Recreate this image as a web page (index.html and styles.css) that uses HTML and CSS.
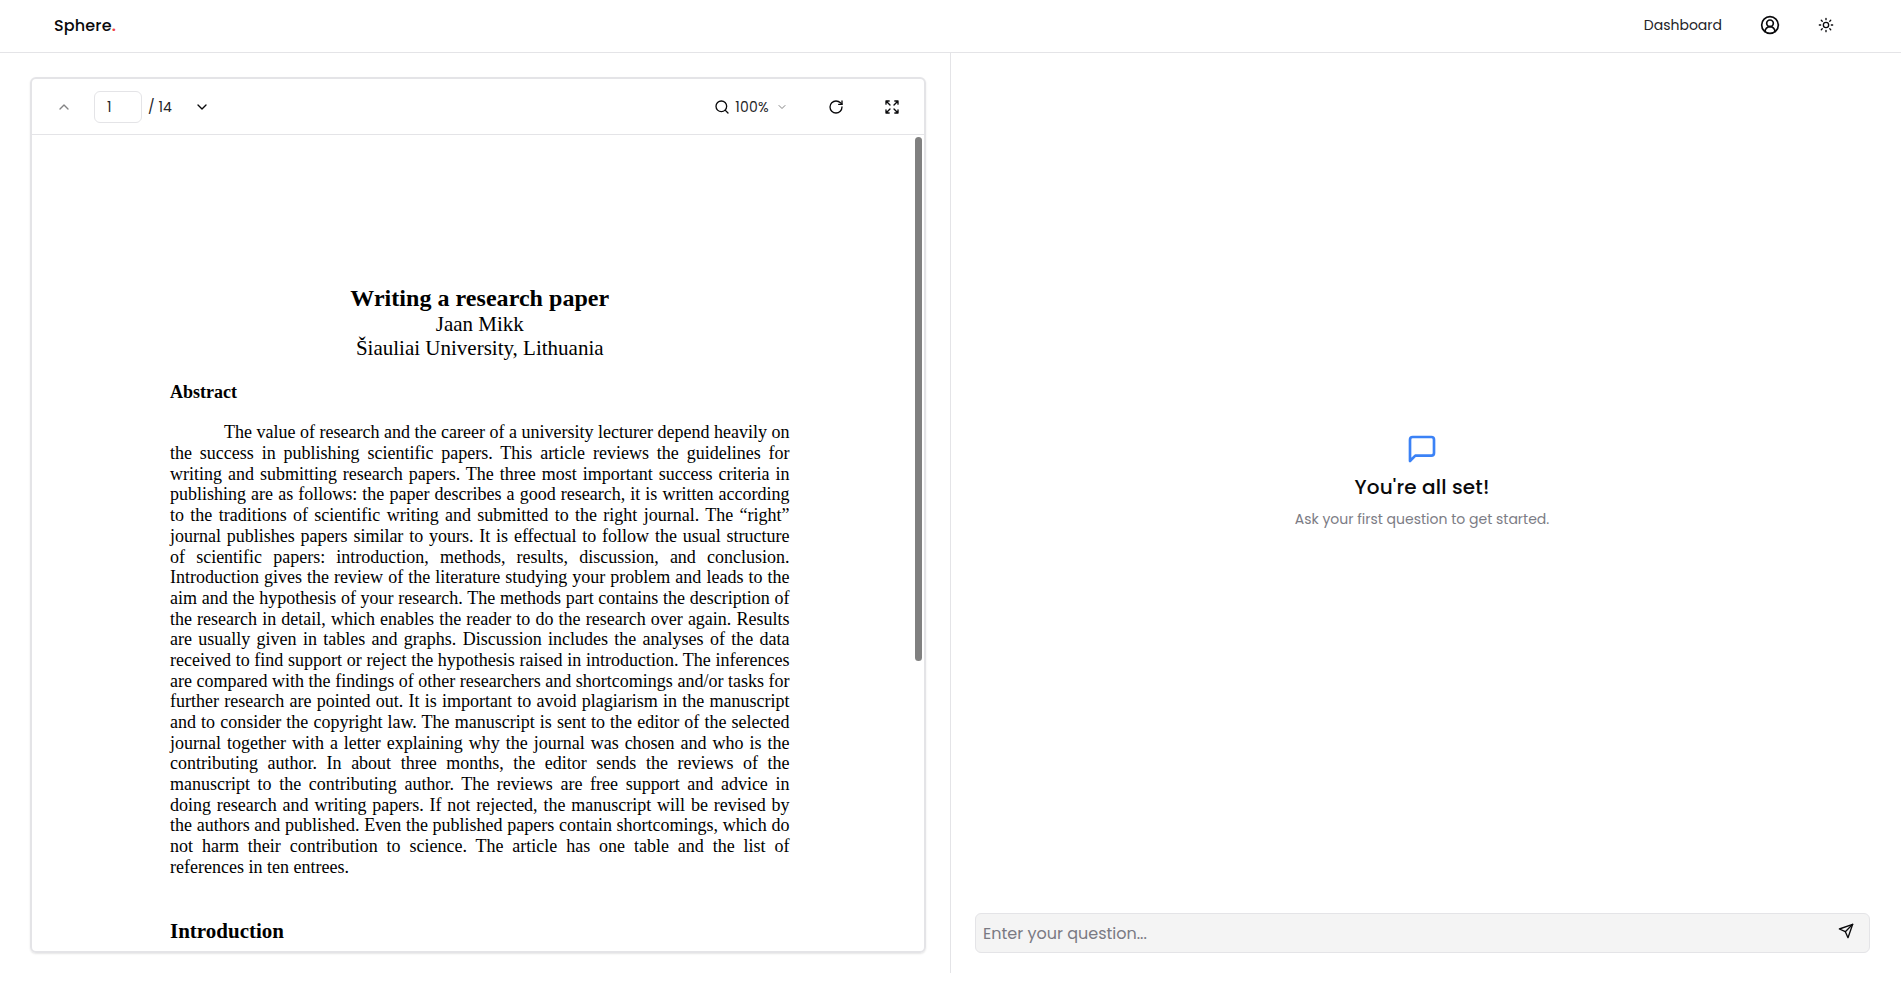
FILE: index.html
```html
<!DOCTYPE html>
<html lang="en">
<head>
<meta charset="utf-8">
<title>Sphere</title>
<link rel="stylesheet" href="styles.css">
</head>
<body>
<header class="navbar">
  <a class="brand">Sphere<span class="dot">.</span></a>
  <nav class="nav-links">
    <a class="nav-link">Dashboard</a>
    <svg class="icon icon-user" viewBox="0 0 24 24"><circle cx="12" cy="12" r="10"/><circle cx="12" cy="10" r="4"/><path d="M18 20a6 6 0 0 0-12 0"/></svg>
    <svg class="icon icon-sun" viewBox="0 0 24 24"><circle cx="12" cy="12" r="4"/><path d="M12 2v2M12 20v2M4.93 4.93l1.41 1.41M17.66 17.66l1.41 1.41M2 12h2M20 12h2M6.34 17.66l-1.41 1.41M19.07 4.93l-1.41 1.41"/></svg>
  </nav>
</header>
<main class="workspace">
  <section class="document-pane">
    <div class="viewer">
      <div class="toolbar">
        <div class="pager">
          <svg class="icon muted" viewBox="0 0 24 24"><path d="m18 15-6-6-6 6"/></svg>
          <div class="page-input">1</div>
          <span class="page-total">/ 14</span>
          <svg class="icon next" viewBox="0 0 24 24"><path d="m6 9 6 6 6-6"/></svg>
        </div>
        <div class="tools">
          <div class="zoom">
            <svg class="icon" viewBox="0 0 24 24"><circle cx="11" cy="11" r="8"/><path d="m21 21-4.3-4.3"/></svg>
            <span class="zoom-value">100%</span>
            <svg class="icon small muted" viewBox="0 0 24 24"><path d="m6 9 6 6 6-6"/></svg>
          </div>
          <svg class="icon" viewBox="0 0 24 24"><path d="M21 12a9 9 0 1 1-9-9c2.52 0 4.93 1 6.74 2.74L21 8"/><path d="M21 3v5h-5"/></svg>
          <svg class="icon" viewBox="0 0 24 24"><path d="m21 21-6-6m6 6v-4.8m0 4.8h-4.8M3 16.2V21m0 0h4.8M3 21l6-6M21 7.8V3m0 0h-4.8M21 3l-6 6M3 7.8V3m0 0h4.8M3 3l6 6"/></svg>
        </div>
      </div>
      <div class="page-area">
        <article class="paper">
          <h1 class="paper-title">Writing a research paper</h1>
          <p class="paper-author">Jaan Mikk</p>
          <p class="paper-author">Šiauliai University, Lithuania</p>
          <h2 class="paper-abstract">Abstract</h2>
          <div class="paper-body">
            <p class="line first">The value of research and the career of a university lecturer depend heavily on</p>
            <p class="line">the success in publishing scientific papers. This article reviews the guidelines for</p>
            <p class="line">writing and submitting research papers. The three most important success criteria in</p>
            <p class="line">publishing are as follows: the paper describes a good research, it is written according</p>
            <p class="line">to the traditions of scientific writing and submitted to the right journal. The “right”</p>
            <p class="line">journal publishes papers similar to yours. It is effectual to follow the usual structure</p>
            <p class="line">of scientific papers: introduction, methods, results, discussion, and conclusion.</p>
            <p class="line">Introduction gives the review of the literature studying your problem and leads to the</p>
            <p class="line">aim and the hypothesis of your research. The methods part contains the description of</p>
            <p class="line">the research in detail, which enables the reader to do the research over again. Results</p>
            <p class="line">are usually given in tables and graphs. Discussion includes the analyses of the data</p>
            <p class="line">received to find support or reject the hypothesis raised in introduction. The inferences</p>
            <p class="line">are compared with the findings of other researchers and shortcomings and/or tasks for</p>
            <p class="line">further research are pointed out. It is important to avoid plagiarism in the manuscript</p>
            <p class="line">and to consider the copyright law. The manuscript is sent to the editor of the selected</p>
            <p class="line">journal together with a letter explaining why the journal was chosen and who is the</p>
            <p class="line">contributing author. In about three months, the editor sends the reviews of the</p>
            <p class="line">manuscript to the contributing author. The reviews are free support and advice in</p>
            <p class="line">doing research and writing papers. If not rejected, the manuscript will be revised by</p>
            <p class="line">the authors and published. Even the published papers contain shortcomings, which do</p>
            <p class="line">not harm their contribution to science. The article has one table and the list of</p>
            <p class="line last">references in ten entrees.</p>
          </div>
          <h2 class="paper-section">Introduction</h2>
        </article>
        <div class="scrollbar"></div>
      </div>
    </div>
  </section>
  <section class="chat-pane">
    <div class="empty-state">
      <svg class="icon icon-chat" viewBox="0 0 24 24"><path d="M21 15a2 2 0 0 1-2 2H7l-4 4V5a2 2 0 0 1 2-2h14a2 2 0 0 1 2 2z"/></svg>
      <h3 class="empty-title">You're all set!</h3>
      <p class="empty-text">Ask your first question to get started.</p>
    </div>
    <div class="prompt">
      <span class="prompt-placeholder">Enter your question...</span>
      <svg class="icon send" viewBox="0 0 24 24"><path d="m22 2-7 20-4-9-9-4Z"/><path d="M22 2 11 13"/></svg>
    </div>
  </section>
</main>
</body>
</html>
```
FILE: styles.css
```css
* { box-sizing: border-box; margin: 0; padding: 0; }

body {
  height: 986px;
  overflow: hidden;
  background: #fff;
  color: #09090b;
  font-family: Poppins, Inter, sans-serif;
  font-size: 14px;
}

.icon {
  width: 16px;
  height: 16px;
  flex: none;
  fill: none;
  stroke: currentColor;
  stroke-width: 2;
  stroke-linecap: round;
  stroke-linejoin: round;
}
.icon.small { width: 12px; height: 12px; }
.icon.muted { opacity: .5; }

.navbar {
  display: flex;
  align-items: center;
  justify-content: space-between;
  height: 53px;
  padding: 0 67px 2px 54px;
  border-bottom: 1px solid #e4e4e7;
}
.brand { font-size: 16px; font-weight: 500; letter-spacing: .15px; }
.dot { color: #ef4444; font-weight: 600; }
.nav-links { display: flex; align-items: center; }
.nav-link, .page-input, .page-total, .zoom-value { color: #242427; }
.icon-user { width: 20px; height: 20px; margin: 0 38px; }

.workspace { display: flex; height: 920px; }
.document-pane {
  width: 951px;
  padding: 24px 24px 20px 30px;
  border-right: 1px solid #e4e4e7;
}
.viewer {
  display: flex;
  flex-direction: column;
  height: 876px;
  border: 2px solid #e4e4e7;
  border-radius: 6px;
  box-shadow: 0 1px 2px rgba(0, 0, 0, .1);
  overflow: hidden;
}
.toolbar {
  display: flex;
  flex: none;
  align-items: center;
  justify-content: space-between;
  height: 56px;
  padding: 1px 24px 0;
  border-bottom: 1px solid #e4e4e7;
}
.pager, .tools, .zoom { display: flex; align-items: center; }
.page-input {
  width: 48px;
  height: 32px;
  margin: 0 6px 0 22px;
  padding-left: 12px;
  border: 1px solid #e4e4e7;
  border-radius: 6px;
  line-height: 30px;
}
.next { margin-left: 22px; }
.tools { gap: 40px; }
.zoom-value { margin: 0 7px 0 5px; letter-spacing: .25px; }

.page-area { position: relative; flex: 1; min-height: 0; }
.scrollbar {
  position: absolute;
  top: 2px;
  right: 2px;
  width: 7px;
  height: 524px;
  border-radius: 4px;
  background: #808080;
}
.paper {
  width: 757.5px;
  padding: 149.8px 0 0 138px;
  color: #000;
  font-family: "Liberation Serif", "Times New Roman", serif;
  font-size: 18px;
  line-height: 20.69px;
}
.paper-title { text-align: center; font-size: 24px; line-height: 27px; letter-spacing: .04px; }
.paper-author { text-align: center; font-size: 21px; line-height: 24.3px; }
.paper-abstract { margin: 21.5px 0 19.8px; font-size: 18px; }
.line { text-align-last: justify; white-space: nowrap; }
.first { padding-left: 54px; }
.last { text-align-last: left; }
.paper-section { margin-top: 41.3px; font-size: 21px; line-height: 24px; }

.chat-pane {
  display: flex;
  flex: 1;
  flex-direction: column;
  padding: 0 31px 20px 24px;
}
.empty-state {
  display: flex;
  flex: 1;
  flex-direction: column;
  align-items: center;
  justify-content: center;
  padding: 0 1px 4px 0;
}
.icon-chat { width: 32px; height: 32px; color: #3b82f6; }
.empty-title { margin-top: 8px; font-size: 20px; font-weight: 500; line-height: 28px; letter-spacing: .15px; }
.empty-text { margin-top: 8px; color: #7c7c85; line-height: 20px; }
.prompt {
  display: flex;
  align-items: center;
  justify-content: space-between;
  height: 40px;
  padding: 0 15px 0 7px;
  border: 1px solid #e4e4e7;
  border-radius: 6px;
  background: #f4f4f4;
}
.prompt-placeholder { color: #7a7a83; font-size: 16px; }
.send { margin-bottom: 4px; }
```
